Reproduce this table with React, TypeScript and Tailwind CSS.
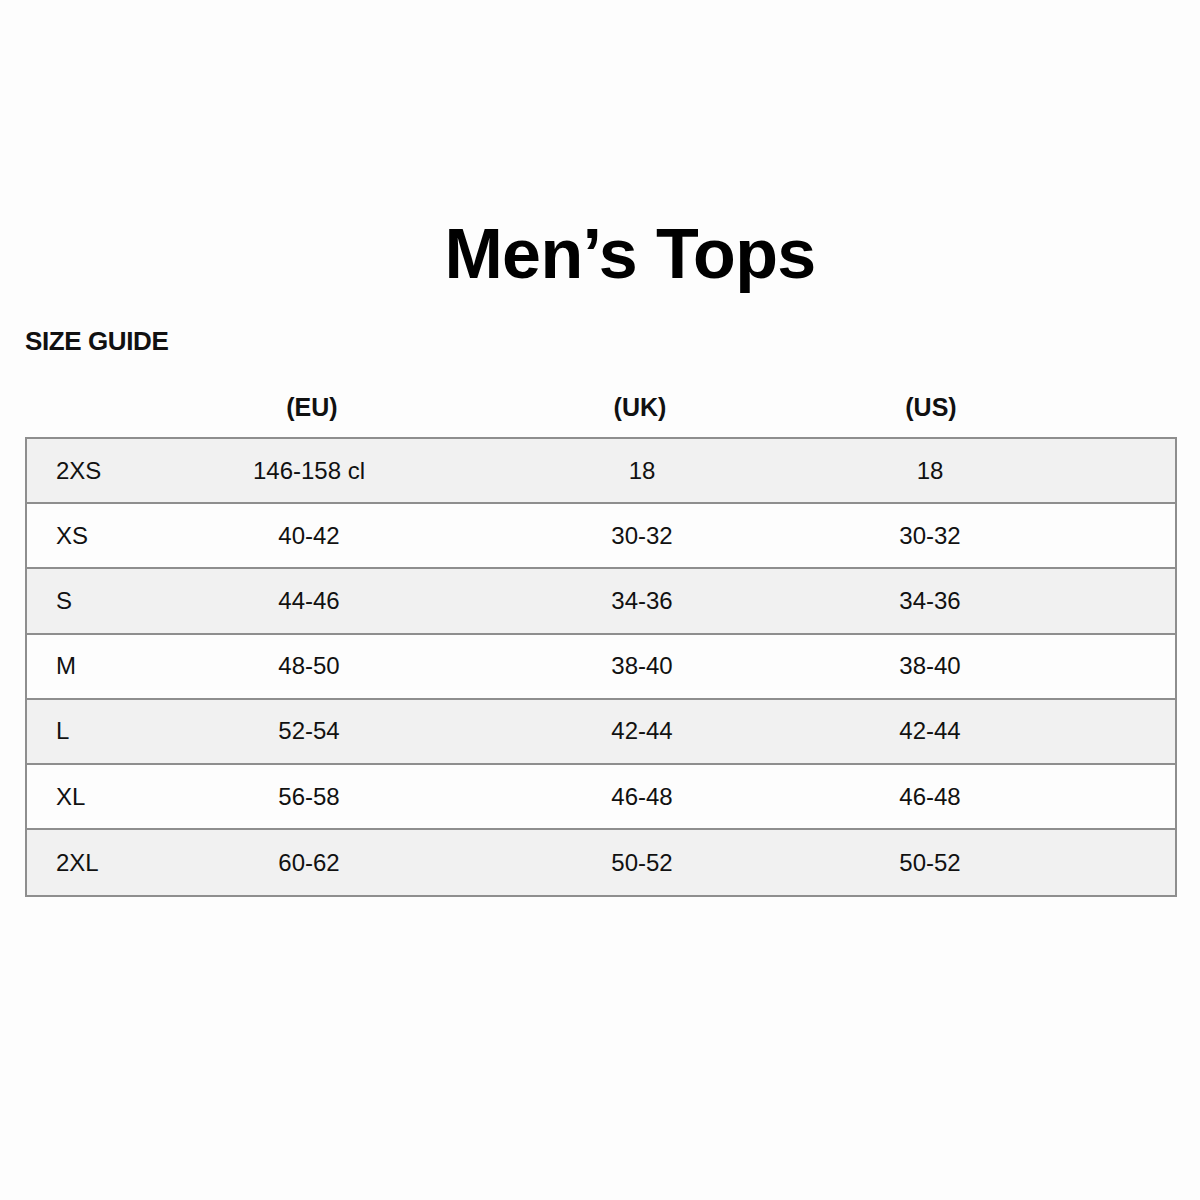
import React from "react";

const rows = [
  { size: "2XS", eu: "146-158 cl", uk: "18", us: "18" },
  { size: "XS", eu: "40-42", uk: "30-32", us: "30-32" },
  { size: "S", eu: "44-46", uk: "34-36", us: "34-36" },
  { size: "M", eu: "48-50", uk: "38-40", us: "38-40" },
  { size: "L", eu: "52-54", uk: "42-44", us: "42-44" },
  { size: "XL", eu: "56-58", uk: "46-48", us: "46-48" },
  { size: "2XL", eu: "60-62", uk: "50-52", us: "50-52" },
];

const cols = "grid grid-cols-[140px_284px_382px_194px_1fr] items-center";

const App: React.FC = () => {
  return (
    <div className="w-[1200px] h-[1200px] bg-[#fdfdfd] text-[#111] font-['Liberation_Sans',Arial,sans-serif]">
      {/* TITLE */}
      <div className="pt-[219px] pl-[60px] text-center">
        <h1 className="text-[70px] font-bold leading-none tracking-[-0.6px] text-black">Men’s Tops</h1>
      </div>

      <div className="pl-[25px] pr-[23px]">
        <h2 className="mt-[39px] text-[26px] font-bold leading-none tracking-[-0.4px]">SIZE GUIDE</h2>

        {/* COLUMN HEADERS */}
        <div className={`${cols} mt-[35px] h-[30px] text-[25px] font-bold`}>
          <div />
          <div className="text-center pl-[10px]">(EU)</div>
          <div className="text-center">(UK)</div>
          <div className="text-center pl-[6px]">(US)</div>
          <div />
        </div>

        {/* TABLE */}
        <div className="mt-[18px] border-2 border-[#8e8e8e]">
          {rows.map((r, i) => (
            <div
              key={r.size}
              className={`${cols} h-[65.2px] text-[24px] ${i % 2 === 0 ? "bg-[#f1f1f1]" : "bg-[#fdfdfd]"} ${i < rows.length - 1 ? "border-b-2 border-[#8e8e8e]" : ""}`}
            >
              <div className="pl-[29px]">{r.size}</div>
              <div className="text-center">{r.eu}</div>
              <div className="text-center">{r.uk}</div>
              <div className="text-center">{r.us}</div>
              <div />
            </div>
          ))}
        </div>
      </div>
    </div>
  );
};

export default App;
